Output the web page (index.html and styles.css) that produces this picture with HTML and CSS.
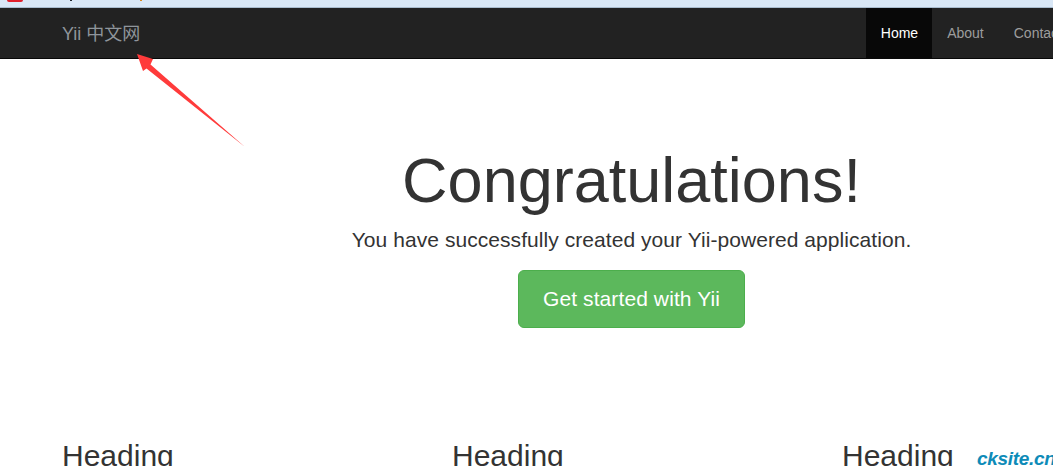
FILE: index.html
```html
<!DOCTYPE html>
<html lang="en">
<head>
    <meta charset="UTF-8">
    <title>Yii 中文网</title>
    <link rel="stylesheet" href="styles.css">
</head>
<body>
    <div class="browser-strip">
        <span class="tab-icon"></span>
        <span class="speck speck-dark"></span>
        <span class="speck speck-orange"></span>
    </div>
    <nav class="navbar">
        <a class="brand" href="#">Yii 中文网</a>
        <ul class="nav-links">
            <li><a class="active" href="#">Home</a></li>
            <li><a href="#">About</a></li>
            <li><a href="#">Contact</a></li>
        </ul>
    </nav>
    <div class="jumbotron">
        <h1>Congratulations!</h1>
        <p>You have successfully created your Yii-powered application.</p>
        <a class="btn-start" href="#">Get started with Yii</a>
    </div>
    <div class="columns">
        <h2>Heading</h2>
        <h2>Heading</h2>
        <h2>Heading</h2>
    </div>
    <svg class="arrow" width="120" height="100" viewBox="0 0 120 100">
        <polygon points="0,1 16,6 13.5,11.5 108,94 9.5,15.5 6,18" fill="#ff3b3b"/>
    </svg>
    <span class="watermark">cksite.cn</span>
</body>
</html>
```

FILE: styles.css
```css
html, body {
    margin: 0;
    padding: 0;
    height: 466px;
    overflow: hidden;
}
body {
    position: relative;
    background: #fff;
    font-family: "Liberation Sans", Arial, "Noto Sans CJK SC", sans-serif;
    font-size: 14px;
    color: #333;
}
.browser-strip {
    height: 7px;
    background: #d9e7f6;
    border-bottom: 1px solid #a9bccf;
    display: flex;
    align-items: flex-start;
    padding-left: 7px;
}
.tab-icon {
    width: 16px;
    height: 2px;
    background: #e0202c;
    border-radius: 0 0 3px 3px;
}
.speck {
    width: 2px;
    height: 1px;
}
.speck-dark {
    margin-left: 47px;
    background: #20242c;
}
.speck-orange {
    margin-left: 68px;
    background: #d98a20;
}
.navbar {
    height: 50px;
    background: #222;
    border-bottom: 1px solid #080808;
    display: flex;
    justify-content: space-between;
    padding-left: 62px;
}
.brand {
    font-size: 18px;
    line-height: 52px;
    color: #8f959b;
    text-decoration: none;
}
.nav-links {
    list-style: none;
    margin: 0 -24px 0 0;
    padding: 0;
    display: flex;
}
.nav-links a {
    display: block;
    padding: 0 15px;
    line-height: 50px;
    color: #9d9d9d;
    text-decoration: none;
}
.nav-links a.active {
    margin-left: 1px;
    padding-right: 14px;
    color: #fff;
    background: #080808;
}
.jumbotron {
    margin-left: 210px;
    text-align: center;
}
.jumbotron h1 {
    margin: 87px 0 0;
    font-size: 63px;
    font-weight: 500;
    line-height: 69px;
}
.jumbotron p {
    margin: 10px 0 0;
    font-size: 21px;
    letter-spacing: 0.06px;
    line-height: 30px;
}
.btn-start {
    display: inline-block;
    margin-top: 15px;
    padding: 14px 24px;
    font-size: 21px;
    letter-spacing: 0.1px;
    line-height: 28px;
    color: #fff;
    background: #5cb85c;
    border: 1px solid #4cae4c;
    border-radius: 6px;
    text-decoration: none;
}
.columns {
    display: flex;
    margin-top: 111px;
    padding-left: 62px;
}
.columns h2 {
    margin: 0;
    flex: 0 0 390px;
    font-size: 30px;
    font-weight: 500;
    line-height: 33px;
    white-space: nowrap;
}
.arrow {
    position: absolute;
    left: 137px;
    top: 53px;
}
.watermark {
    position: absolute;
    left: 977px;
    top: 448px;
    font-size: 19px;
    letter-spacing: -0.3px;
    font-weight: bold;
    font-style: italic;
    color: #0d8bb8;
}
```
